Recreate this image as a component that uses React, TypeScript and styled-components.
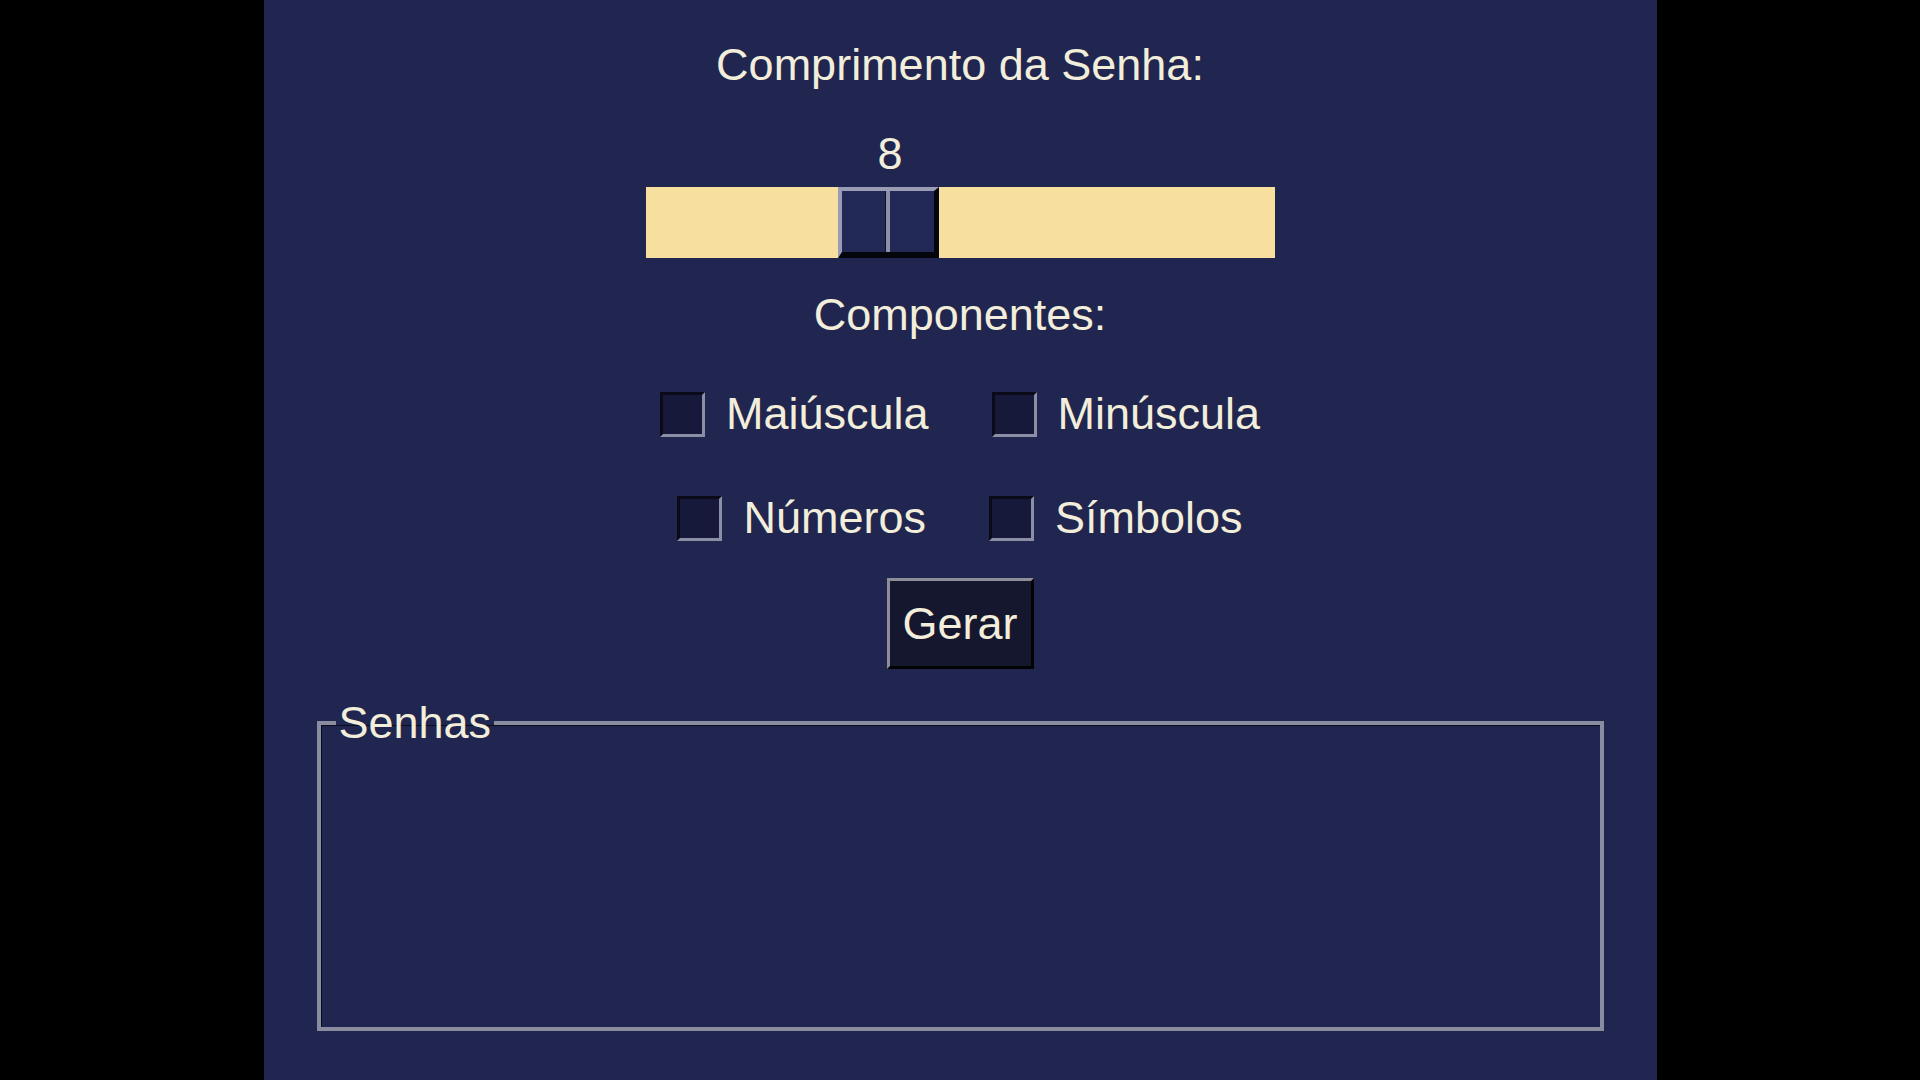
import React from "react";
import styled, { createGlobalStyle } from "styled-components";

const Global = createGlobalStyle`
  html, body { margin: 0; padding: 0; background: #000; }
  body { font-family: "Liberation Sans", Arial, sans-serif; }
`;

const Screen = styled.div`
  width: 1920px;
  height: 1080px;
  display: flex;
  justify-content: center;
  background: #000;
  overflow: hidden;
`;

const Panel = styled.main`
  width: 1393px;
  height: 1080px;
  background: #20264f;
  display: flex;
  flex-direction: column;
  align-items: center;
  color: #f3eedb;
  font-size: 45px;
  line-height: 52px;
`;

const Heading = styled.div<{ $top: number }>`
  margin-top: ${(p) => p.$top}px;
  white-space: nowrap;
`;

const ScaleWrap = styled.div`
  margin-top: 39px;
  width: 629px;
  display: flex;
  flex-direction: column;
`;

const ValueRow = styled.div`
  position: relative;
  height: 52px;
`;

const ValueText = styled.span`
  position: absolute;
  top: -2px;
  transform: translateX(-50%);
`;

const Trough = styled.div`
  position: relative;
  margin-top: 5px;
  height: 71px;
  background: #f7df9f;
`;

const Thumb = styled.div`
  position: absolute;
  top: 0;
  width: 101px;
  height: 71px;
  box-sizing: border-box;
  background: #232957;
  border-top: 4px solid #9a9cb6;
  border-left: 4px solid #9a9cb6;
  border-right: 5px solid #05050c;
  border-bottom: 6px solid #05050c;
  display: flex;
  justify-content: center;
`;

const ThumbLine = styled.div`
  width: 5px;
  box-sizing: border-box;
  border-left: 1px solid #10122a;
  background: #8e90aa;
`;

const Options = styled.div`
  margin-top: 47px;
  display: flex;
  flex-direction: column;
  align-items: center;
  gap: 52px;
`;

const OptionRow = styled.div`
  display: flex;
  align-items: center;
  gap: 63px;
`;

const Check = styled.label`
  display: flex;
  align-items: center;
  gap: 21px;
  white-space: nowrap;
  cursor: pointer;
`;

const Box = styled.span`
  width: 45px;
  height: 45px;
  box-sizing: border-box;
  background: #17193b;
  border-top: 3px solid #0a0a18;
  border-left: 3px solid #0a0a18;
  border-right: 3px solid #8c8ea6;
  border-bottom: 3px solid #8c8ea6;
`;

const Button = styled.button`
  margin-top: 34px;
  width: 147px;
  height: 91px;
  box-sizing: border-box;
  background: #15172f;
  color: #f3eedb;
  font-family: inherit;
  font-size: 45px;
  border-top: 3px solid #8e8e9a;
  border-left: 3px solid #8e8e9a;
  border-right: 3px solid #030306;
  border-bottom: 3px solid #030306;
  padding: 0;
  cursor: pointer;
`;

const Frame = styled.fieldset`
  margin: 28px 0 0 0;
  width: 1287px;
  height: 334px;
  box-sizing: border-box;
  padding: 0;
  border: 4px solid #8a8c9f;
  box-shadow: inset 1px 1px 0 #0b0c1c;
  min-width: 0;
`;

const Legend = styled.legend`
  margin-left: 15px;
  padding: 0 3px;
  line-height: 52px;
  color: #f3eedb;
`;

const rows = [
  ["Maiúscula", "Minúscula"],
  ["Números", "Símbolos"],
];

export default function App() {
  const min = 4;
  const max = 15;
  const value = 8;
  const troughW = 629;
  const thumbW = 101;
  const left = ((value - min) / (max - min)) * (troughW - thumbW);
  return (
    <>
      <Global />
      <Screen>
        <Panel>
          <Heading $top={39}>Comprimento da Senha:</Heading>
          <ScaleWrap>
            <ValueRow>
              <ValueText style={{ left: left + thumbW / 2 + 2 }}>{value}</ValueText>
            </ValueRow>
            <Trough>
              <Thumb style={{ left }}>
                <ThumbLine />
              </Thumb>
            </Trough>
          </ScaleWrap>
          <Heading $top={31}>Componentes:</Heading>
          <Options>
            {rows.map((r) => (
              <OptionRow key={r[0]}>
                {r.map((o) => (
                  <Check key={o}>
                    <Box />
                    {o}
                  </Check>
                ))}
              </OptionRow>
            ))}
          </Options>
          <Button>Gerar</Button>
          <Frame>
            <Legend>Senhas</Legend>
          </Frame>
        </Panel>
      </Screen>
    </>
  );
}
